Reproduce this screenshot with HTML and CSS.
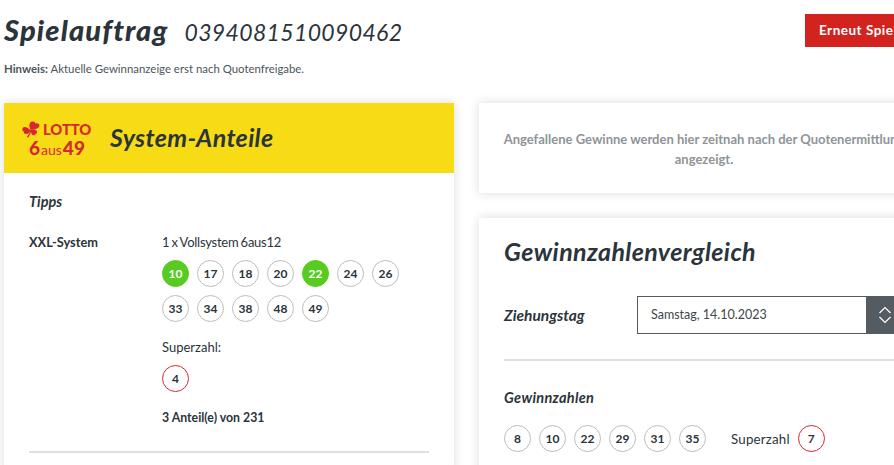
FILE: index.html
```html
<!DOCTYPE html>
<html lang="de">
<head>
<meta charset="utf-8">
<title>Spielauftrag</title>
<link rel="stylesheet" href="styles.css">
</head>
<body>
<div class="page">
  <header class="top">
    <div>
      <h1 class="title"><span class="title-main">Spielauftrag</span><span class="title-num">0394081510090462</span></h1>
      <p class="hint"><b>Hinweis:</b> Aktuelle Gewinnanzeige erst nach Quotenfreigabe.</p>
    </div>
    <a class="btn">Erneut Spielen</a>
  </header>
  <main class="cols">
    <section class="card">
      <div class="brand">
        <div class="logo">
          <div class="logo-top">
            <svg class="clover" width="18" height="18" viewBox="0 0 18 18"><g fill="#d7282f"><path d="M8.800 9C6.800 6 6.800 1.800 9.800.6c1.800-.6 3.500.3 3.500 1.800 1.800-.7 4.200.2 4.200 2.100 0 2-2.100 3-4 3.400-1.600.4-3 .6-4.700 1.100z"/><path d="M8.500 9.200C6 7 3 5.200 1.200 6.600-.3 7.800.1 10.300 1.800 10.500c-.4 1.600.8 2.800 2.400 2.600C6.600 12.800 7.900 11 8.500 9.200z"/><path d="M9.200 9c2.200-.7 4.500-.6 5.500.9.800 1.300.2 3-1.300 3.100-.3 1.200-1.700 1.600-2.800.9C9 12.800 8.900 10.900 9.200 9z"/><path d="M8.300 8.600 9.500 9C9 11.600 7.700 14.300 5.900 16.800L4.900 16C6.600 13.700 7.800 11.300 8.300 8.600z"/></g></svg>
            <span class="logo-lotto">LOTTO</span>
          </div>
          <div class="logo-bottom"><b>6</b><span>aus</span><b>49</b></div>
        </div>
        <h2 class="brand-title">System-Anteile</h2>
      </div>
      <div class="card-body">
        <h3 class="tipps">Tipps</h3>
        <div class="tip">
          <div class="tip-name">XXL-System</div>
          <div class="tip-data">
            <div class="line line-system">1 x Vollsystem 6aus12</div>
            <div class="balls wrap">
              <span class="ball hit">10</span><span class="ball">17</span><span class="ball">18</span><span class="ball">20</span><span class="ball hit">22</span><span class="ball">24</span><span class="ball">26</span>
              <span class="ball">33</span><span class="ball">34</span><span class="ball">38</span><span class="ball">48</span><span class="ball">49</span>
            </div>
            <div class="line super-label">Superzahl:</div>
            <div class="balls"><span class="ball red">4</span></div>
            <div class="share">3 Anteil(e) von 231</div>
          </div>
        </div>
        <hr class="rule">
      </div>
    </section>
    <div class="right">
      <section class="card notice">Angefallene Gewinne werden hier zeitnah nach der Quotenermittlung<br>angezeigt.</section>
      <section class="card compare">
        <h2 class="compare-title">Gewinnzahlenvergleich</h2>
        <div class="draw-row">
          <div class="draw-label">Ziehungstag</div>
          <div class="select">
            <span class="select-text">Samstag, 14.10.2023</span>
            <span class="select-btn">
              <svg width="14" height="20" viewBox="0 0 14 20" fill="none" stroke="#fff" stroke-width="1.200"><path d="M1.500 8 7 2.500 12.500 8"/><path d="M1.500 12 7 17.500 12.500 12"/></svg>
            </span>
          </div>
        </div>
        <hr class="rule rule-b">
        <h3 class="numbers-title">Gewinnzahlen</h3>
        <div class="balls nums">
          <span class="ball">8</span><span class="ball">10</span><span class="ball">22</span><span class="ball">29</span><span class="ball">31</span><span class="ball">35</span>
          <span class="nums-label">Superzahl</span><span class="ball red">7</span>
        </div>
      </section>
    </div>
  </main>
</div>
</body>
</html>
```
FILE: styles.css
```css
html, body { margin: 0; padding: 0; height: 465px; overflow: hidden; background: #fff; }
body { font-family: "Lato", "Liberation Sans", sans-serif; color: #2b343b; }
.page { width: 925px; padding-left: 4px; }
.top { display: flex; justify-content: space-between; align-items: flex-start; height: 103px; }
.title { margin: 12px 0 0; height: 36px; display: flex; align-items: baseline; font-style: italic; line-height: 36px; }
.title-main { font-size: 29px; font-weight: 900; letter-spacing: 1.150px; }
.title-num { font-size: 23px; font-weight: 400; margin-left: 16px; letter-spacing: .35px; }
.hint { margin: 13px 0 0; font-size: 11.400px; line-height: 16px; color: #4c555c; }
.btn { margin-top: 14px; height: 33px; width: 110px; padding-left: 14px; background: #d2231f; color: #fff; font-weight: 700; font-size: 13.500px; line-height: 33px; letter-spacing: .5px; white-space: nowrap; overflow: hidden; }
.cols { display: flex; gap: 25px; align-items: flex-start; }
.card { width: 450px; background: #fff; box-shadow: 0 0 10px rgba(0,0,0,.14); }
.brand { height: 70px; background: #f7dc15; display: flex; align-items: center; padding-left: 18px; }
.logo { width: 88px; color: #d7282f; font-weight: 900; }
.logo-top { display: flex; align-items: center; gap: 3px; height: 18px; }
.logo-lotto { font-size: 14.800px; line-height: 17px; letter-spacing: -.1px; }
.logo-bottom { display: flex; align-items: baseline; margin-left: 7px; line-height: 17px; height: 17px; }
.logo-bottom b { font-size: 19px; font-weight: 900; }
.logo-bottom span { font-size: 14px; font-weight: 400; margin: 0 1px; }
.brand-title { margin: 0 0 2px; font-size: 25px; font-weight: 700; font-style: italic; line-height: 30px; letter-spacing: .35px; }
.card-body { padding: 20px 25px 0; height: 279px; }
.tipps { margin: 0; font-size: 14.500px; font-weight: 700; font-style: italic; line-height: 17px; }
.tip { display: flex; margin-top: 24px; }
.tip-name { flex: none; width: 133px; font-size: 12.800px; font-weight: 700; line-height: 17px; }
.tip-data { flex: 1; font-size: 13px; }
.line { line-height: 17px; }
.line-system { letter-spacing: -.25px; word-spacing: -.8px; }
.balls { display: flex; gap: 8px; margin-top: 9px; }
.wrap { flex-wrap: wrap; width: 260px; }
.ball { width: 27px; height: 27px; box-sizing: border-box; border: 1px solid #bcbcbc; border-radius: 50%; display: flex; align-items: center; justify-content: center; font-size: 12px; font-weight: 700; }
.ball.hit { background: #57cb1f; border-color: #57cb1f; color: #fff; }
.ball.red { border-color: #d7282f; }
.super-label { margin-top: 17px; }
.share { margin-top: 17px; font-size: 12.300px; font-weight: 700; line-height: 17px; }
.rule { border: 0; height: 2px; background: #e0e0e0; margin: 25px 0 0; }
.right { display: flex; flex-direction: column; gap: 25px; }
.notice { height: 90px; box-sizing: border-box; padding: 26px 20px 0; text-align: center; font-size: 13px; font-weight: 700; line-height: 20px; color: #8f9498; white-space: nowrap; overflow: hidden; }
.compare { box-sizing: border-box; height: 260px; padding: 18px 25px 0; }
.compare-title { margin: 0; font-size: 25px; font-weight: 700; font-style: italic; line-height: 30px; letter-spacing: .4px; }
.draw-row { display: flex; align-items: center; margin-top: 30px; }
.draw-label { width: 133px; font-size: 15.500px; font-weight: 700; font-style: italic; }
.select { flex: 1; height: 38px; box-sizing: border-box; border: 1px solid #555c61; display: flex; justify-content: space-between; }
.select-text { padding-left: 13px; font-size: 12.500px; line-height: 36px; color: #3e464c; }
.select-btn { width: 37px; background: #555c61; display: flex; align-items: center; padding-left: 12px; box-sizing: border-box; }
.rule-b { margin-top: 25px; }
.numbers-title { margin: 28px 0 0; font-size: 14.500px; font-weight: 700; font-style: italic; line-height: 17px; letter-spacing: .3px; }
.nums { align-items: center; margin-top: 19px; }
.nums-label { margin-left: 17px; font-size: 13.300px; letter-spacing: .2px; }
```
